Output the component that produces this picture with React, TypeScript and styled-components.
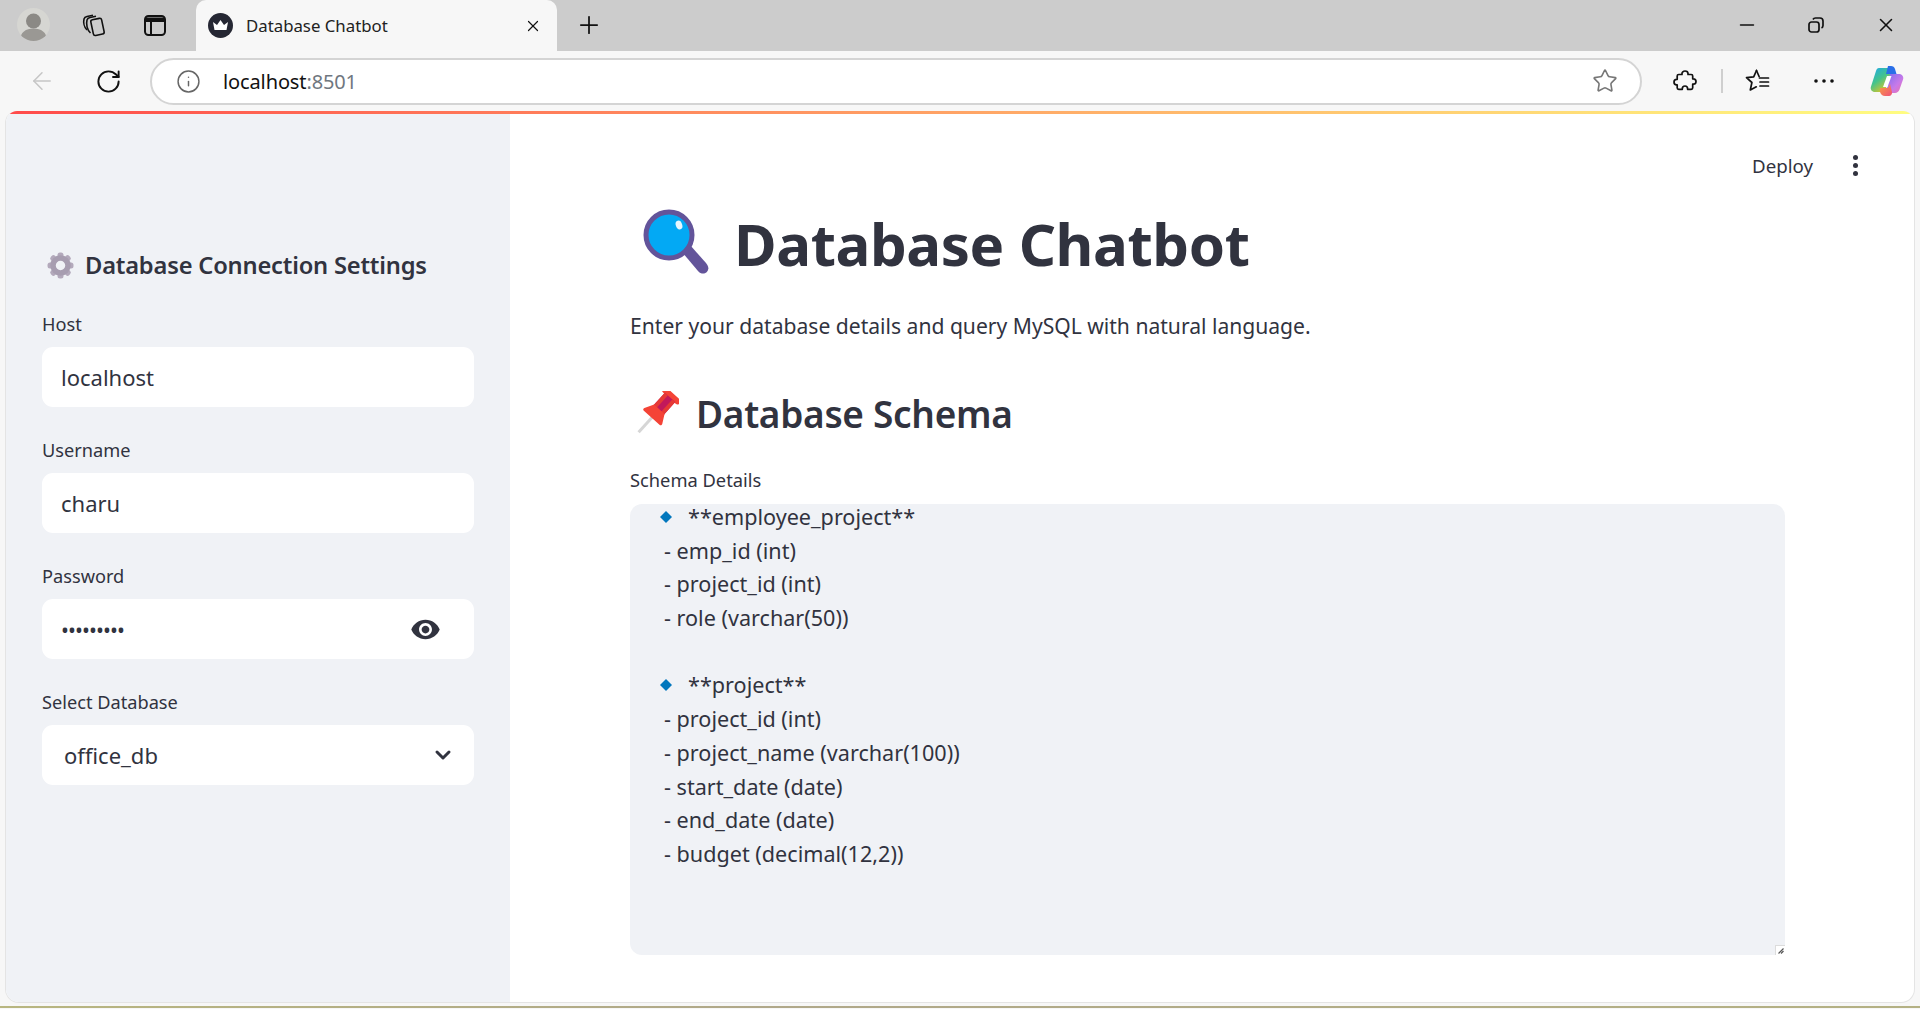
import styled, { createGlobalStyle } from 'styled-components';
import { ArrowLeft, ChevronDown, Info, Minus, Plus, RotateCw, Star, X } from 'lucide-react';
import { MdVisibility } from 'react-icons/md';

const TEXT = '#31333f';
const FONT = '"Noto Sans", "Open Sans", sans-serif';

const Global = createGlobalStyle`
	html, body { margin: 0; padding: 0; height: 100%; background: #f7f7f7; }
	#root { height: 100%; }
	* { box-sizing: border-box; }
`;

const Page = styled.div`
	width: 1920px;
	height: 1009px;
	display: flex;
	flex-direction: column;
	overflow: hidden;
	background: #f7f7f7;
	font-family: ${FONT};
	color: ${TEXT};
`;

/* browser chrome */
const TabStrip = styled.div`
	height: 51px;
	flex: none;
	display: flex;
	align-items: center;
	background: #cccccc;
	color: #111;
`;
const StripSlot = styled.div<{ $w: number }>`
	width: ${(p) => p.$w}px;
	height: 49px;
	align-self: flex-start;
	flex: none;
	display: flex;
	align-items: center;
	justify-content: center;
`;
const Tab = styled.div`
	width: 361px;
	height: 51px;
	flex: none;
	display: flex;
	align-items: center;
	padding: 0 15px 0 12px;
	background: #f7f7f7;
	border-radius: 10px 10px 0 0;
`;
const TabTitle = styled.span`
	flex: 1;
	margin-left: 13px;
	font-size: 16.8px;
	color: #222;
`;
const Spacer = styled.div`
	flex: 1;
`;
const Avatar = styled.div`
	width: 33px;
	height: 33px;
	border-radius: 50%;
	background: #d6d6d2;
	overflow: hidden;
`;
const Toolbar = styled.div`
	height: 60px;
	flex: none;
	display: flex;
	align-items: center;
	padding-left: 9px;
	background: #f7f7f7;
	color: #111;
`;
const ToolSlot = styled.div<{ $w: number; $ml?: number }>`
	width: ${(p) => p.$w}px;
	margin-left: ${(p) => p.$ml ?? 0}px;
	height: 47px;
	flex: none;
	display: flex;
	align-items: center;
	justify-content: center;
`;
const AddressBar = styled.div`
	width: 1492px;
	height: 47px;
	margin-left: 9px;
	flex: none;
	display: flex;
	align-items: center;
	padding-left: 24px;
	background: #fff;
	border: 2px solid #d4d4d4;
	border-radius: 24px;
	font-size: 20px;
	letter-spacing: -0.12px;
`;
const Host = styled.span`
	margin-left: 22px;
	color: #111;
`;
const Port = styled.span`
	color: #6f7780;
`;
const AddressStar = styled.div`
	margin-left: auto;
	margin-right: 22px;
	display: flex;
	color: #777;
`;
const Divider = styled.div`
	width: 2px;
	height: 24px;
	margin-left: 11px;
	background: #cfcfcf;
	flex: none;
`;

/* app window */
const AppWindow = styled.div`
	flex: 1;
	margin: 0 5px 0 5px;
	display: flex;
	flex-direction: column;
	overflow: hidden;
	background: #fff;
	border-radius: 12px 12px 14px 14px;
	border: 1px solid #e4e4e4;
	border-top: 0;
	min-height: 0;
`;
const RainbowBar = styled.div`
	height: 3px;
	flex: none;
	background: linear-gradient(90deg, #ff4b4b, #fffd80);
`;
const AppBody = styled.div`
	flex: 1;
	display: flex;
	min-height: 0;
`;
const Sidebar = styled.aside`
	width: 504px;
	flex: none;
	padding: 131px 36px 0;
	background: #f0f2f6;
`;
const SideTitle = styled.h2`
	margin: 0 0 26px 5px;
	height: 40px;
	display: flex;
	align-items: center;
	gap: 11px;
	font-size: 23.7px;
	font-weight: 600;
	letter-spacing: -0.2px;
`;
const Field = styled.div`
	margin-bottom: 30px;
`;
const FieldLabel = styled.div`
	height: 36px;
	padding-top: 1px;
	font-size: 18.2px;
	line-height: 24px;
`;
const Control = styled.div<{ $pl?: number; $pr?: number }>`
	height: 60px;
	display: flex;
	align-items: center;
	justify-content: space-between;
	padding: 0 ${(p) => p.$pr ?? 19}px 0 ${(p) => p.$pl ?? 19}px;
	background: #fff;
	border-radius: 11px;
	font-size: 22px;
`;
const Dots = styled.span`
	font-size: 21px;
	letter-spacing: -0.9px;
	line-height: 1;
	padding-top: 2px;
`;
const Main = styled.main`
	flex: 1;
	min-width: 0;
	padding: 0 129px 0 120px;
`;
const HeaderRow = styled.div`
	margin-right: -73px;
	display: flex;
	align-items: center;
	justify-content: flex-end;
	padding-top: 39px;
	height: 63px;
`;
const Deploy = styled.span`
	font-size: 18.7px;
	margin-right: 40px;
`;
const Kebab = styled.div`
	display: flex;
	flex-direction: column;
	gap: 3px;
	span {
		width: 5px;
		height: 5px;
		border-radius: 50%;
		background: ${TEXT};
	}
`;
const Title = styled.h1`
	margin: 22px 0 0 13px;
	height: 88px;
	display: flex;
	align-items: center;
	gap: 23px;
	font-size: 58.2px;
	font-weight: 700;
	letter-spacing: -0.4px;
`;
const Lead = styled.p`
	margin: 24px 0 0;
	font-size: 21.1px;
	line-height: 30px;
`;
const SectionTitle = styled.h2`
	margin: 47px 0 0 4px;
	height: 50px;
	display: flex;
	align-items: center;
	gap: 17px;
	font-size: 37px;
	font-weight: 600;
	letter-spacing: -0.3px;
`;
const SchemaLabel = styled.div`
	margin-top: 30px;
	height: 36px;
	font-size: 18.3px;
	line-height: 24px;
`;
const SchemaBox = styled.div`
	position: relative;
	height: 451px;
	padding-left: 34px;
	background: #f0f2f6;
	border-radius: 12px 12px 0 12px;
	font-size: 21.6px;
	line-height: 26px;
`;
const ResizeGrip = styled.div`
	position: absolute;
	right: 0;
	bottom: 0;
	width: 10px;
	height: 10px;
	display: flex;
	align-items: center;
	justify-content: center;
	background: #fff;
	border-top: 1px solid #dcdcdc;
	border-left: 1px solid #dcdcdc;
`;
const SchemaLine = styled.div`
	height: 26px;
	margin-bottom: 7.7px;
	white-space: pre;
`;
const TableLine = styled(SchemaLine)`
	display: flex;
	align-items: center;
	margin-left: -5px;
	gap: 15px;
`;
const BottomLine = styled.div`
	height: 2px;
	margin-top: 3px;
	margin-bottom: 1px;
	flex: none;
	background: linear-gradient(90deg, #b8b680, #b0a88a 40%, #b4b184);
`;

const Collections = () => (
	<svg width="26" height="26" viewBox="0 0 26 26" fill="none" stroke="#111" strokeWidth="1.6" strokeLinejoin="round">
		<rect x="11" y="7" width="11" height="16" rx="2" transform="rotate(-12 16 15)" />
		<path d="M9.5 21C6 18 5 12 6 8c.4-1.5 1.5-2.2 3-2.5l6-1.3" />
		<path d="M6 18C3 15 2.3 10 3 7c.4-1.5 1.5-2.2 3-2.5l6-1.3" />
	</svg>
);

const TabsIcon = () => (
	<svg width="24" height="24" viewBox="0 0 24 24" fill="none">
		<rect x="2" y="3" width="20" height="19" rx="3.5" stroke="#111" strokeWidth="2" />
		<path d="M3 4.5h18V9H9v12H7V9H3z" fill="#111" />
	</svg>
);

const Person = () => (
	<svg width="33" height="33" viewBox="0 0 33 33">
		<circle cx="16.5" cy="13" r="7.5" fill="#8b8985" />
		<path d="M3 33c0-9 6-12.500 13.500-12.500S30 24 30 33z" fill="#9a9894" />
	</svg>
);

const Crown = () => (
	<svg width="25" height="25" viewBox="0 0 25 25">
		<circle cx="12.500" cy="12.500" r="12.500" fill="#252733" />
		<path d="M5 9l4 3 3.500-5 3.500 5 4-3-1.500 8h-12z" fill="#fff" />
	</svg>
);

const Restore = () => (
	<svg width="18" height="18" viewBox="0 0 18 18" fill="none" stroke="#111" strokeWidth="1.7">
		<rect x="2" y="6" width="10" height="10" rx="2.500" />
		<path d="M6 3.500C6.500 2.500 7.500 2 8.500 2H13c1.700 0 3 1.300 3 3v4.500c0 1-.5 2-1.500 2.500" />
	</svg>
);

const Puzzle = () => (
	<svg width="24" height="24" viewBox="0 0 24 24" fill="none" stroke="#111" strokeWidth="1.7" strokeLinejoin="round">
		<path d="M12 2c1.800 0 3 1.200 3 2.600V5.500h3.200c.9 0 1.500.6 1.500 1.500v2.800h.6c1.500 0 2.700 1 2.700 2.700s-1.200 2.700-2.700 2.700h-.6v3.600c0 .9-.6 1.500-1.500 1.500h-3.600v-.6c0-1.500-1-2.700-2.600-2.700s-2.700 1.200-2.700 2.700v.6H5.700c-.9 0-1.500-.6-1.500-1.500v-2.900h-.6C2 15.900 1 14.500 1 13s1-2.700 2.600-2.700h.6V7c0-.9.600-1.500 1.500-1.500H9v-.9C9 3.200 10.200 2 12 2z" />
	</svg>
);

const Favorites = () => (
	<svg width="26" height="26" viewBox="0 0 26 26" fill="none" stroke="#111" strokeWidth="1.7" strokeLinejoin="round" strokeLinecap="round">
		<path d="M11.500 2.500L8.700 8.900 1.500 9.700l5.400 4.800-1.600 7.500 6-3.200" />
		<path d="M11.500 2.500l2.600 6" />
		<path d="M14.500 10h9M15 14h8.500M15 18h8.500" />
	</svg>
);

const MoreDots = () => (
	<svg width="22" height="6" viewBox="0 0 22 6" fill="#111">
		<circle cx="3" cy="3" r="1.800" />
		<circle cx="11" cy="3" r="1.800" />
		<circle cx="19" cy="3" r="1.800" />
	</svg>
);

const Copilot = () => (
	<svg width="34" height="32" viewBox="0 0 34 32">
		<defs>
			<linearGradient id="cp-a" x1="0" y1="0" x2="0.7" y2="1">
				<stop offset="0" stopColor="#1aa7f0" />
				<stop offset="0.5" stopColor="#45c48a" />
				<stop offset="1" stopColor="#f5c518" />
			</linearGradient>
			<linearGradient id="cp-b" x1="0" y1="0" x2="1" y2="1">
				<stop offset="0" stopColor="#7a6cf0" />
				<stop offset="0.6" stopColor="#c87ae8" />
				<stop offset="1" stopColor="#f06fa8" />
			</linearGradient>
			<linearGradient id="cp-c" x1="0" y1="0" x2="1" y2="1">
				<stop offset="0" stopColor="#f8a040" />
				<stop offset="1" stopColor="#f0507a" />
			</linearGradient>
		</defs>
		<path d="M9 3h13c1 0 1.500 1 1 2l-7 18c-1 2.500-3 4-5 4H5c-3 0-5-2.500-4-5.500L6 6c.5-2 1.500-3 3-3z" fill="url(#cp-a)" />
		<path d="M18 1h3c2 0 3.500 1 4 3l1.500 5H16z" fill="#2a6fe8" />
		<path d="M20 9h9c3 0 5 2.500 4 5.500l-3.500 10c-.8 2.200-2.500 3.500-4.500 3.500h-9z" fill="url(#cp-b)" />
		<path d="M10 23h8l2-4 2 8c.4 2-1 4-3 4h-4c-2.500 0-4-1.500-5-4z" fill="url(#cp-c)" />
		<path d="M17 11h4.500l-4 11H13z" fill="#fff" />
	</svg>
);

const Gear = () => (
	<svg width="27" height="27" viewBox="0 0 27 27">
		{[0, 45, 90, 135, 180, 225, 270, 315].map((a) => (
			<rect key={a} x="10.500" y="0.500" width="6" height="7" rx="2.500" fill="#b3a9bb" transform={`rotate(${a} 13.500 13.500)`} />
		))}
		<circle cx="13.500" cy="13.500" r="7.500" fill="none" stroke="#a79db0" strokeWidth="5.500" />
	</svg>
);

const Magnifier = () => (
	<svg width="68" height="68" viewBox="0 0 68 68">
		<path d="M39 43l8-7 16 18c3 3.500 3 7 .6 9.200s-6 1.800-8.600-1.200z" fill="#63549a" />
		<circle cx="26" cy="26" r="23" fill="#03a9f4" stroke="#63549a" strokeWidth="5" />
		<ellipse cx="36" cy="16" rx="3.200" ry="4.500" fill="#e8f6fd" transform="rotate(-20 36 16)" />
	</svg>
);

const Pin = () => (
	<svg width="45" height="44" viewBox="0 0 45 44">
		<g transform="rotate(42 22 22)">
			<rect x="20.500" y="26" width="3" height="22" fill="#d6d6d6" />
			<rect x="11" y="-4" width="22" height="6" rx="2.500" fill="#f44336" />
			<rect x="15" y="1" width="14" height="18" fill="#c2185b" />
			<path d="M15 1h4v18h-4zM25 1h4v18h-4z" fill="#e53935" />
			<path d="M15 17h14l5 9c.5 1.200 0 2.500-1.500 2.500h-21C10 28.500 9.500 27.200 10 26z" fill="#f44336" />
		</g>
	</svg>
);

const Diamond = () => (
	<svg width="14" height="14" viewBox="0 0 14 14">
		<path d="M7 1l6 6-6 6-6-6z" fill="#0277bd" />
	</svg>
);

const GripMark = () => (
	<svg width="6" height="6" viewBox="0 0 6 6" stroke="#555" strokeWidth="1.2" fill="none">
		<path d="M0.500 5.500L5.500 0.500M3 5.500L5.500 3" />
	</svg>
);

const fields = [
	{ label: 'Host', value: 'localhost' },
	{ label: 'Username', value: 'charu' },
];

const schema = [
	{ table: 'employee_project' },
	{ text: '- emp_id (int)' },
	{ text: '- project_id (int)' },
	{ text: '- role (varchar(50))' },
	{ text: ' ' },
	{ table: 'project' },
	{ text: '- project_id (int)' },
	{ text: '- project_name (varchar(100))' },
	{ text: '- start_date (date)' },
	{ text: '- end_date (date)' },
	{ text: '- budget (decimal(12,2))' },
];

export default function App() {
	return (
		<Page>
			<Global />
			<TabStrip>
				<StripSlot $w={66}>
					<Avatar>
						<Person />
					</Avatar>
				</StripSlot>
				<StripSlot $w={56}>
					<Collections />
				</StripSlot>
				<StripSlot $w={66}>
					<TabsIcon />
				</StripSlot>
				<StripSlot $w={8} />
				<Tab>
					<Crown />
					<TabTitle>Database Chatbot</TabTitle>
					<X size={18} strokeWidth={1.6} />
				</Tab>
				<StripSlot $w={64}>
					<Plus size={28} strokeWidth={1.5} />
				</StripSlot>
				<Spacer />
				<StripSlot $w={66}>
					<Minus size={22} strokeWidth={1.8} />
				</StripSlot>
				<StripSlot $w={72}>
					<Restore />
				</StripSlot>
				<StripSlot $w={68}>
					<X size={22} strokeWidth={1.7} />
				</StripSlot>
			</TabStrip>
			<Toolbar>
				<ToolSlot $w={66}>
					<ArrowLeft size={28} strokeWidth={1.3} color="#c6c6c6" />
				</ToolSlot>
				<ToolSlot $w={66}>
					<RotateCw size={27} strokeWidth={1.7} />
				</ToolSlot>
				<AddressBar>
					<Info size={25} strokeWidth={1.4} color="#666" />
					<Host>
						localhost<Port>:8501</Port>
					</Host>
					<AddressStar>
						<Star size={26} strokeWidth={1.5} />
					</AddressStar>
				</AddressBar>
				<ToolSlot $w={50} $ml={18}>
					<Puzzle />
				</ToolSlot>
				<Divider />
				<ToolSlot $w={50} $ml={10}>
					<Favorites />
				</ToolSlot>
				<ToolSlot $w={50} $ml={16}>
					<MoreDots />
				</ToolSlot>
				<ToolSlot $w={42} $ml={17}>
					<Copilot />
				</ToolSlot>
			</Toolbar>
			<AppWindow>
				<RainbowBar />
				<AppBody>
					<Sidebar>
						<SideTitle>
							<Gear />
							Database Connection Settings
						</SideTitle>
						{fields.map((f) => (
							<Field key={f.label}>
								<FieldLabel>{f.label}</FieldLabel>
								<Control>{f.value}</Control>
							</Field>
						))}
						<Field>
							<FieldLabel>Password</FieldLabel>
							<Control $pr={33}>
								<Dots>•••••••••</Dots>
								<MdVisibility size={31} color={TEXT} />
							</Control>
						</Field>
						<Field>
							<FieldLabel>Select Database</FieldLabel>
							<Control $pl={22}>
								<span>office_db</span>
								<ChevronDown size={24} strokeWidth={3} color={TEXT} />
							</Control>
						</Field>
					</Sidebar>
					<Main>
						<HeaderRow>
							<Deploy>Deploy</Deploy>
							<Kebab>
								<span />
								<span />
								<span />
							</Kebab>
						</HeaderRow>
						<Title>
							<Magnifier />
							Database Chatbot
						</Title>
						<Lead>Enter your database details and query MySQL with natural language.</Lead>
						<SectionTitle>
							<Pin />
							Database Schema
						</SectionTitle>
						<SchemaLabel>Schema Details</SchemaLabel>
						<SchemaBox>
							{schema.map((row, i) =>
								row.table ? (
									<TableLine key={i}>
										<Diamond />
										{`**${row.table}**`}
									</TableLine>
								) : (
									<SchemaLine key={i}>{row.text}</SchemaLine>
								),
							)}
							<ResizeGrip>
								<GripMark />
							</ResizeGrip>
						</SchemaBox>
					</Main>
				</AppBody>
			</AppWindow>
			<BottomLine />
		</Page>
	);
}
